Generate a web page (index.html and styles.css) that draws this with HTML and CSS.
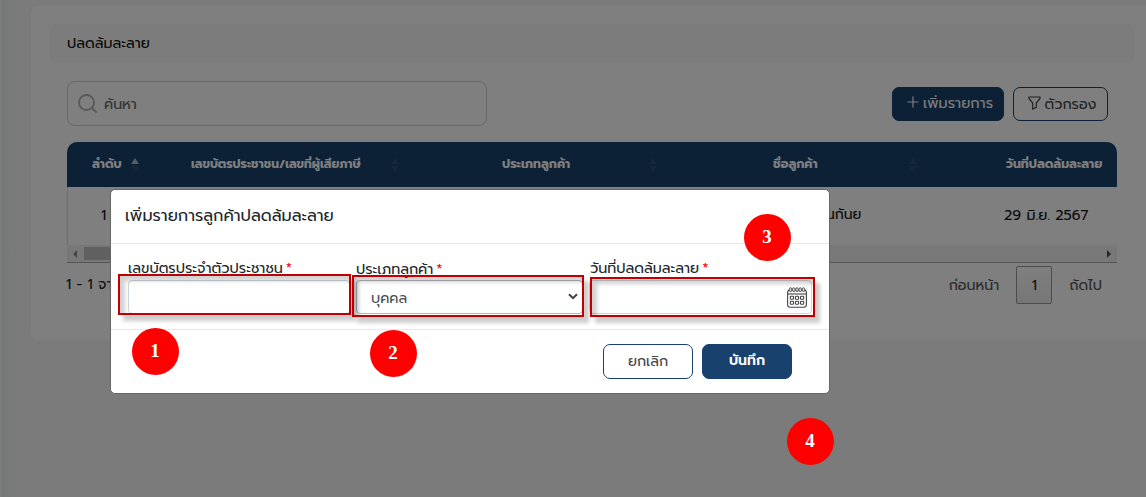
FILE: index.html
```html
<!DOCTYPE html>
<html lang="th">
<head>
<meta charset="utf-8">
<title>ปลดล้มละลาย</title>
<link rel="stylesheet" href="styles.css">
</head>
<body>
<main class="page">
  <section class="card">
    <h1 class="title">ปลดล้มละลาย</h1>
    <div class="toolbar">
      <div class="search">
        <svg width="20" height="20" viewBox="0 0 20 20"><circle cx="8.500" cy="8.500" r="7.500"/><path d="M14 14l4.500 4.500"/></svg>
        <span>ค้นหา</span>
      </div>
      <div class="actions">
        <button class="btn add"><svg width="12" height="12" viewBox="0 0 12 12"><path d="M6 .5v11M.5 6h11"/></svg><span>เพิ่มรายการ</span></button>
        <button class="btn filter"><svg width="13" height="14" viewBox="0 0 13 14"><path d="M1 1h11v1.500L8.300 7v4.300L4.700 13V7L1 2.500z"/></svg><span>ตัวกรอง</span></button>
      </div>
    </div>
    <div class="table">
      <div class="thead">
        <div class="th c1"><span>ลำดับ</span><i class="sort asc"></i></div>
        <div class="th c2"><span>เลขบัตรประชาชน/เลขที่ผู้เสียภาษี</span><i class="sort"></i></div>
        <div class="th c3"><span>ประเภทลูกค้า</span><i class="sort"></i></div>
        <div class="th c4"><span>ชื่อลูกค้า</span><i class="sort"></i></div>
        <div class="th c5"><span>วันที่ปลดล้มละลาย</span></div>
      </div>
      <div class="row"><span class="no">1</span><span class="name">นกันย</span><span class="date">29 มิ.ย. 2567</span></div>
      <div class="scroll"><i class="left"></i><i class="thumb"></i><i class="right"></i></div>
    </div>
    <div class="foot">
      <span class="count">1 - 1 จาก 1</span>
      <div class="pager"><span>ก่อนหน้า</span><b>1</b><span>ถัดไป</span></div>
    </div>
  </section>
</main>
<div class="backdrop"></div>
<div class="modal">
  <header class="modal-head">เพิ่มรายการลูกค้าปลดล้มละลาย</header>
  <div class="modal-body">
    <div class="field f1"><label><span>เลขบัตรประจำตัวประชาชน</span><em>*</em></label><div class="input"></div></div>
    <div class="field f2"><label><span>ประเภทลูกค้า</span><em>*</em></label><div class="input select"><span>บุคคล</span><svg width="10" height="7" viewBox="0 0 10 7"><path d="M1 1.200l4 4 4-4"/></svg></div></div>
    <div class="field f3"><label><span>วันที่ปลดล้มละลาย</span><em>*</em></label><div class="input date-input">
      <svg width="20" height="21" viewBox="0 0 20 21"><rect x=".6" y="3" width="18.800" height="17.200" rx="2.500"/><path d="M1 7h18"/><g class="rings"><ellipse cx="3.500" cy="2.700" rx="1.300" ry="2"/><ellipse cx="6.800" cy="2.700" rx="1.300" ry="2"/><ellipse cx="10" cy="2.700" rx="1.300" ry="2"/><ellipse cx="13.200" cy="2.700" rx="1.300" ry="2"/><ellipse cx="16.500" cy="2.700" rx="1.300" ry="2"/></g><rect x="3.300" y="9.300" width="3.200" height="2.900" rx=".8"/><rect x="8.400" y="9.300" width="3.200" height="2.900" rx=".8"/><rect x="13.500" y="9.300" width="3.200" height="2.900" rx=".8"/><rect x="3.300" y="14.300" width="3.200" height="2.900" rx=".8"/><rect x="8.400" y="14.300" width="3.200" height="2.900" rx=".8"/><rect x="13.500" y="14.300" width="3.200" height="2.900" rx=".8"/></svg>
    </div></div>
  </div>
  <footer class="modal-foot"><button class="btn cancel"><span>ยกเลิก</span></button><button class="btn save"><span>บันทึก</span></button></footer>
</div>
<div class="mark m1"></div><div class="mark m2"></div><div class="mark m3"></div>
<div class="pin p1">1</div><div class="pin p2">2</div><div class="pin p3">3</div><div class="pin p4">4</div>
</body>
</html>
```
FILE: styles.css
```css
* { box-sizing: border-box; }
body { margin: 0; width: 1146px; height: 497px; overflow: hidden; position: relative; background: #f7f7f7; font: 14.300px/20px Prompt, Kanit, "Noto Sans Thai", "Noto Sans", sans-serif; color: #212529; }
span { white-space: nowrap; }
svg { fill: none; stroke: currentColor; flex: none; }
.page { height: 497px; padding: 6px 0 0 31px; background: linear-gradient(90deg, #f8f9fa 0, #f8f9fa 2px, #eceef0 2px, #f2f3f4 7px, #f7f7f7 14px); }
.card { height: 334px; padding: 18px 11px 0 18px; background: #fff; border-radius: 8px 0 0 8px; }
.title { margin: 0; height: 39px; border-radius: 8px; background: #f8f8f8; padding: 9px 18px; font-size: 14.400px; line-height: 20px; font-weight: 400; color: #111; }
.toolbar { display: flex; justify-content: space-between; margin: 18px 27px 0 18px; }
.search { display: flex; align-items: center; gap: 6px; width: 420px; height: 45px; border: 1px solid #ced0d2; border-radius: 8px; padding: 1px 0 0 10px; color: #666; }
.search svg { stroke: #b0b0b0; stroke-width: 1.8; }
.actions { display: flex; gap: 9px; padding-top: 6px; }
.btn { display: flex; align-items: center; justify-content: center; height: 34px; border: 1px solid #19416d; border-radius: 7px; padding: 0; background: #fff; color: #444; font: inherit; }
.add, .save { background: #19416d; color: #fff; }
.add { width: 112px; gap: 4px; padding: 0 0 2px 4px; font-size: 14.500px; }
.add svg, .filter svg { margin-bottom: 2px; }
.filter { width: 95px; gap: 4px; padding: 0 0 1px 3px; }
.btn svg { stroke-width: 1.2; }
.table { margin: 16px 18px 0; height: 121px; border-bottom: 1px solid #aaa; }
.thead { display: flex; height: 45px; background: #19416d; border-radius: 10px 10px 0 0; color: #fff; font-weight: 700; font-size: 12.400px; }
.th { display: flex; align-items: center; justify-content: space-between; }
.th span { padding-bottom: 1px; }
.c1 { width: 72px; padding-left: 25px; }
.c2 { width: 260px; padding-left: 52px; }
.c2 span { font-size: 12.100px; }
.c3 { width: 258px; padding-left: 103px; }
.c4 { width: 260px; padding-left: 116px; }
.c5 { width: 200px; padding-left: 89px; }
.sort { width: 8px; display: grid; gap: 2px; }
.sort::before, .sort::after { content: ""; border: 4px solid transparent; border-top: 0; border-bottom: 6px solid #304e70; }
.sort::after { border-bottom: 0; border-top: 6px solid #304e70; }
.asc::before { border-bottom-color: #aeb8c4; }
.row { height: 58px; border-left: 1px solid #ddd; display: grid; grid-template-columns: 758px 178px auto; align-items: center; padding-bottom: 2px; color: #111; }
.row .no { padding-left: 33px; }
.row .name { font-size: 14px; }
.row .date { font-size: 14.400px; }
.scroll { height: 17px; background: #f1f1f1; display: flex; align-items: center; }
.scroll i { display: block; }
.scroll .left { border: 4px solid transparent; border-left: 0; border-right: 4px solid #8b8b8b; margin-left: 6px; }
.scroll .thumb { height: 13px; width: 570px; margin-left: 7px; background: #c1c1c1; }
.scroll .right { border: 4px solid transparent; border-right: 0; border-left: 4px solid #505050; margin: 0 6px 0 auto; }
.foot { display: flex; justify-content: space-between; padding: 3px 33px 0 17px; color: #222; }
.count { padding-top: 8px; }
.pager { display: flex; align-items: center; gap: 17px; color: #555; }
.pager b { width: 36px; height: 38px; border: 1px solid #999; border-radius: 2px; background: linear-gradient(#fff, #eee); text-align: center; line-height: 36px; color: #222; font-weight: 400; }
.backdrop { position: absolute; inset: 0; background: rgba(0, 0, 0, .5); }
.modal { position: absolute; left: 110px; top: 189px; width: 720px; height: 205px; background: #fff; border: 1px solid #666; border-radius: 5px; }
.modal-head { height: 54px; border-bottom: 1px solid #e7e8e9; padding: 15px 14px; font-size: 16.200px; line-height: 22px; }
.modal-body { height: 86px; border-bottom: 1px solid #e7e8e9; padding: 14px 17px 0; display: flex; gap: 6px; }
.f1 { width: 222px; }
.f2 { width: 227px; }
.f3 { width: 223px; }
.field label { display: flex; gap: 3px; height: 22px; font-size: 14.400px; }
.field.f2 label { padding-top: 1px; }
.f3 label { padding-left: 1px; }
.field em { color: red; font-style: normal; }
.input { height: 34px; border: 1px solid #ced4da; border-radius: 4px; display: flex; align-items: center; justify-content: space-between; color: #495057; }
.select { padding: 1px 4px 0 14px; border-color: #b2b4bd; }
.select svg { stroke: #444; stroke-width: 2; margin-bottom: 2px; }
.date-input { justify-content: flex-end; padding-right: 4px; color: #444; }
.date-input svg { stroke-width: 1.1; }
.rings { stroke-width: .9; fill: #ddd; }
.modal-foot { display: flex; justify-content: flex-end; gap: 9px; padding: 14px 37px; }
.modal-foot .btn { width: 90px; height: 35px; padding-bottom: 1px; }
.modal-foot .save { font-weight: 600; font-size: 14px; }
.mark { position: absolute; border: 2px solid #c00000; box-shadow: 5px 6px 4px rgba(0, 0, 0, .2), inset 5px 5px 4px rgba(0, 0, 0, .18); }
.m1 { left: 118px; top: 274px; width: 233px; height: 41px; }
.m2 { left: 352px; top: 275px; width: 232px; height: 42px; }
.m3 { left: 590px; top: 277px; width: 225px; height: 40px; }
.pin { position: absolute; width: 47px; height: 47px; border-radius: 50%; background: red; color: #fff; text-align: center; font: bold 19px/46px "Liberation Serif", serif; }
.p1 { left: 131.500px; top: 327.500px; }
.p2 { left: 369.500px; top: 329.500px; }
.p3 { left: 743.500px; top: 213.500px; }
.p4 { left: 786.500px; top: 417.500px; }
```
